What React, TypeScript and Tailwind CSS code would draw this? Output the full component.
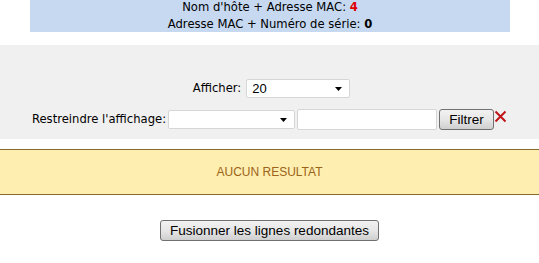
import React from "react";

function Arrow() {
    return (
        <svg width="7" height="4" viewBox="0 0 7 4" className="shrink-0">
            <path d="M0 0 H7 L3.5 4 Z" fill="#000" />
        </svg>
    );
}

function FakeSelect({ value, width }: { value?: string; width: string }) {
    return (
        <div className={`${width} h-[19px] bg-white border border-[#d6d6d6] rounded-[2px] flex items-center justify-between pl-[5px] pr-[7px] text-[13px] font-['Liberation_Sans',Arial,sans-serif] text-black`}>
            <span>{value ?? ""}</span>
            <Arrow />
        </div>
    );
}

export default function App() {
    return (
        <div className="w-[539px] h-[263px] bg-white overflow-hidden font-['DejaVu_Sans',Verdana,sans-serif] text-[11.6px] text-black">
            {/* summary */}
            <div className="mx-[30px] w-[480px] h-[32px] bg-[#c6d9f1] flex flex-col items-center justify-center leading-[17px]">
                <div>Nom d'hôte + Adresse MAC: <b className="text-[#e00000]">4</b></div>
                <div>Adresse MAC + Numéro de série: <b>0</b></div>
            </div>

            {/* filter panel */}
            <div className="mt-[13px] h-[94px] bg-[#f0f0f0] flex flex-col items-center pt-[34px]">
                <div className="flex items-center gap-[5px] ml-[4px]">
                    <span>Afficher:</span>
                    <FakeSelect value="20" width="w-[104px]" />
                </div>
                <div className="flex items-center mt-[11px]">
                    <span className="mr-[2px]">Restreindre l'affichage:</span>
                    <FakeSelect width="w-[127px]" />
                    <div className="ml-[2px] w-[140px] h-[21px] bg-white border border-[#d6d6d6] rounded-[2px]" />
                    <button className="ml-[2px] w-[55px] h-[21px] border border-[#707070] rounded-[3px] bg-gradient-to-b from-[#f2f2f2] via-[#e6e6e6] to-[#cfcfcf] text-[13.5px] font-['Liberation_Sans',Arial,sans-serif] text-black leading-none">
                        Filtrer
                    </button>
                    <svg width="13" height="13" viewBox="0 0 13 13" className="-mt-[6px]">
                        <path d="M1.5 1.5 L11.5 11.5 M11.5 1.5 L1.5 11.5" stroke="#c0161b" strokeWidth="2" />
                    </svg>
                </div>
            </div>

            {/* no result */}
            <div className="mt-[10px] h-[46px] bg-[#feeeb0] border-y border-[#8a6a2a] flex items-center justify-center text-[#9c6418] text-[12px] font-['Liberation_Sans',Arial,sans-serif]">
                AUCUN RESULTAT
            </div>

            <div className="flex justify-center mt-[25px]">
                <button className="w-[219px] h-[21px] border border-[#707070] rounded-[3px] bg-gradient-to-b from-[#f2f2f2] via-[#e6e6e6] to-[#cfcfcf] text-[13.5px] font-['Liberation_Sans',Arial,sans-serif] text-black leading-none">
                    Fusionner les lignes redondantes
                </button>
            </div>
        </div>
    );
}
